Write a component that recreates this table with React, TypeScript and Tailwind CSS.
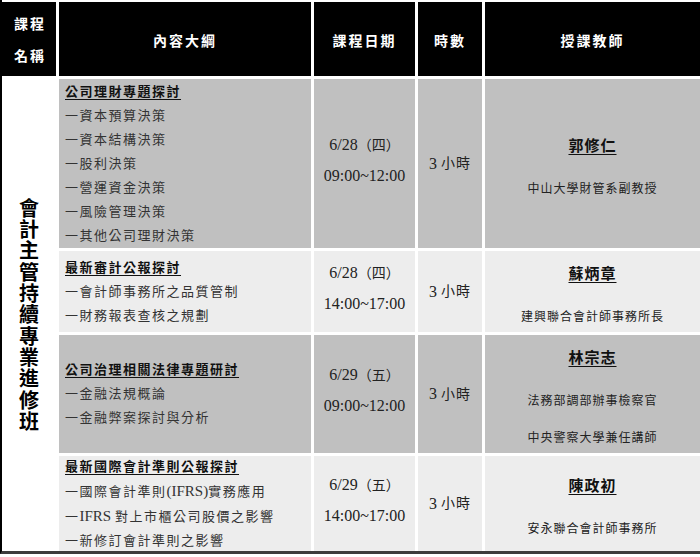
import React from "react";

const FONT = { fontFamily: '"Liberation Serif", "Noto Sans CJK TC", serif' };

type Row = {
  bg: string;
  title: string;
  items: React.ReactNode[];
  day: string;
  wd: string;
  time: string;
  name: string;
  affs: string[];
};

const rows: Row[] = [
  {
    bg: "bg-[#c0c0c0]",
    title: "公司理財專題探討",
    items: ["一資本預算決策", "一資本結構決策", "一股利決策", "一營運資金決策", "一風險管理決策", "一其他公司理財決策"],
    day: "6/28",
    wd: "（四）",
    time: "09:00~12:00",
    name: "郭修仁",
    affs: ["中山大學財管系副教授"],
  },
  {
    bg: "bg-[#ededed]",
    title: "最新審計公報探討",
    items: ["一會計師事務所之品質管制", "一財務報表查核之規劃"],
    day: "6/28",
    wd: "（四）",
    time: "14:00~17:00",
    name: "蘇炳章",
    affs: ["建興聯合會計師事務所長"],
  },
  {
    bg: "bg-[#c0c0c0]",
    title: "公司治理相關法律專題研討",
    items: ["一金融法規概論", "一金融弊案探討與分析"],
    day: "6/29",
    wd: "（五）",
    time: "09:00~12:00",
    name: "林宗志",
    affs: ["法務部調部辦事檢察官", "中央警察大學兼任講師"],
  },
  {
    bg: "bg-[#ededed]",
    title: "最新國際會計準則公報探討",
    items: [
      <>一國際會計準則<span className="tracking-normal text-[15px]">(IFRS)</span>實務應用</>,
      <>一<span className="tracking-normal text-[15px]">IFRS </span>對上市櫃公司股價之影響</>,
      "一新修訂會計準則之影響",
    ],
    day: "6/29",
    wd: "（五）",
    time: "14:00~17:00",
    name: "陳政初",
    affs: ["安永聯合會計師事務所"],
  },
];

const vertical = "會計主管持續專業進修班".split("");

export default function App() {
  return (
    <div className="w-[700px] h-[557px] bg-white" style={FONT}>
      <div className="w-[700px] pt-[2px] border-l-2 border-l-black border-b-[3px] border-b-[#3c3c3c] grid grid-cols-[54px_252px_101px_64px_215px] grid-rows-[74px_169px_81px_118px_95px] gap-[3px] bg-white">
        {/* header */}
        <div className="bg-black text-white font-bold text-[14px] tracking-[2px] flex flex-col items-center justify-center leading-[32px] pt-[4px] pl-[2px]">
          <div>課程</div>
          <div>名稱</div>
        </div>
        <div className="bg-black text-white font-bold text-[14px] tracking-[2px] flex items-center justify-center pt-[4px]">內容大綱</div>
        <div className="bg-black text-white font-bold text-[14px] tracking-[2px] flex items-center justify-center pt-[4px]">課程日期</div>
        <div className="bg-black text-white font-bold text-[14px] tracking-[2px] flex items-center justify-center pt-[4px]">時數</div>
        <div className="bg-black text-white font-bold text-[14px] tracking-[2px] flex items-center justify-center pt-[4px]">授課教師</div>

        {/* first column */}
        <div className="row-span-4 bg-white flex flex-col items-center justify-center text-[20px] font-bold leading-[21.3px] text-black pt-[2px]">
          {vertical.map((c, i) => (
            <div key={i}>{c}</div>
          ))}
        </div>

        {rows.map((r, idx) => (
          <React.Fragment key={idx}>
            <div className={`${r.bg} flex flex-col justify-center pl-[6px] text-[13px] tracking-[1.5px] leading-[24px]`}>
              <div className="font-bold text-[#111]">
                <span className="underline underline-offset-[3px] decoration-[1px]">{r.title}</span>
              </div>
              {r.items.map((it, j) => (
                <div key={j} className="text-[#333]">{it}</div>
              ))}
            </div>
            <div className={`${r.bg} flex flex-col items-center justify-center leading-[30px] pb-[7px] text-[#222]`}>
              <div>
                <span className="text-[16px]">{r.day}</span>
                <span className="text-[14px]">{r.wd}</span>
              </div>
              <div className="text-[16px]">{r.time}</div>
            </div>
            <div className={`${r.bg} flex items-center justify-center text-[#222]`}>
              <span className="text-[16px]">3&nbsp;</span>
              <span className="text-[14px] tracking-[1px]">小時</span>
            </div>
            <div className={`${r.bg} flex flex-col items-center justify-center pt-[7px]`}>
              <div className="text-[15px] font-bold tracking-[1px] leading-[24px] text-[#111] underline underline-offset-[3px] decoration-[1px]">{r.name}</div>
              {r.affs.map((a, j) => (
                <div key={j} className={`text-[12px] tracking-[1px] leading-[24px] text-[#222] ${j === 0 ? "mt-[19px]" : "mt-[13px]"}`}>{a}</div>
              ))}
            </div>
          </React.Fragment>
        ))}
      </div>
    </div>
  );
}
